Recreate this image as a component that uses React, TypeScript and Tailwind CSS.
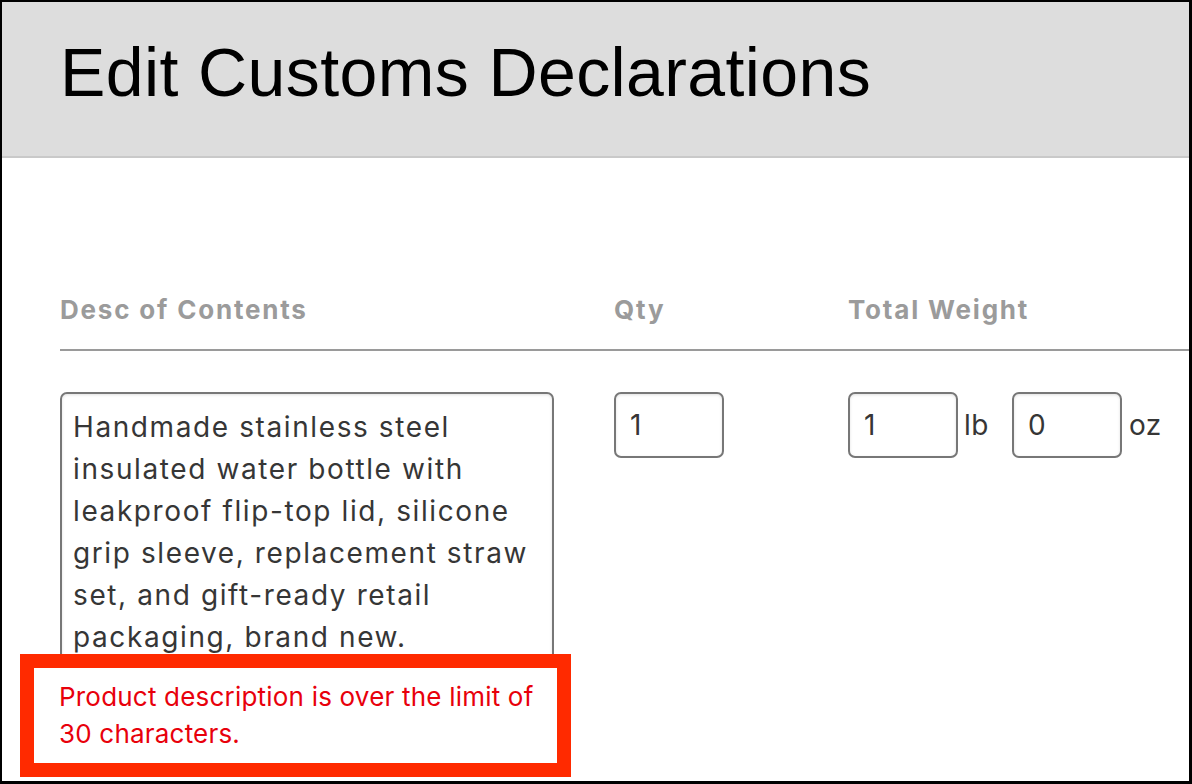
export default function App() {
  return (
    <div className="w-[1192px] h-[784px] bg-black p-[2px] pr-[3px] pb-[3px] overflow-hidden" style={{ fontFamily: "Inter, 'Liberation Sans', sans-serif" }}>
      <div className="h-full bg-white flex flex-col">
        {/* Header */}
        <div className="h-[156px] shrink-0 bg-[#dddddd] border-b-2 border-[#c9c9c9] flex items-center pl-[58px]">
          <h1 className="text-[68px] leading-none text-black tracking-[0.4px] pb-[14px]" style={{ fontFamily: "'Liberation Sans', Arial, sans-serif" }}>
            Edit Customs Declarations
          </h1>
        </div>

        {/* Table */}
        <div className="pl-[58px] pt-[139px] relative flex-1">
          <div className="flex items-end border-b-2 border-[#9a9a9a] pb-[26px] text-[26px] font-bold text-[#9b9b9b] leading-none tracking-[1.8px]">
            <div className="w-[554px]">Desc of Contents</div>
            <div className="w-[234px]">Qty</div>
            <div>Total Weight</div>
          </div>

          <div className="flex items-start pt-[41px] text-[28px] text-[#363636]">
            <div className="w-[554px]">
              <textarea
                className="w-[494px] h-[272px] border-2 border-[#777] rounded-[7px] pl-[11px] pr-[8px] pt-[12px] leading-[42px] tracking-[1.6px] text-[#363636] resize-y outline-none shadow-[inset_0_1px_3px_rgba(0,0,0,0.12)]"
                defaultValue="Handmade stainless steel insulated water bottle with leakproof flip-top lid, silicone grip sleeve, replacement straw set, and gift-ready retail packaging, brand new."
              />
            </div>
            <div className="w-[234px]">
              <input
                className="w-[110px] h-[66px] border-2 border-[#777] rounded-[7px] px-[14px] text-[#363636] outline-none shadow-[inset_0_1px_3px_rgba(0,0,0,0.12)]"
                defaultValue="1"
              />
            </div>
            <div className="flex items-center">
              <input
                className="w-[110px] h-[66px] border-2 border-[#777] rounded-[7px] px-[14px] text-[#363636] outline-none shadow-[inset_0_1px_3px_rgba(0,0,0,0.12)]"
                defaultValue="1"
              />
              <span className="ml-[6px] mr-[23px] text-[28px] tracking-[0.5px]">lb</span>
              <input
                className="w-[110px] h-[66px] border-2 border-[#777] rounded-[7px] px-[14px] text-[#363636] outline-none shadow-[inset_0_1px_3px_rgba(0,0,0,0.12)]"
                defaultValue="0"
              />
              <span className="ml-[7px] text-[28px] tracking-[0.5px]">oz</span>
            </div>
          </div>

          {/* Error annotation */}
          <div className="absolute left-[18px] top-[496px] w-[551px] h-[123px] border-[14px] border-[#ff2a00] bg-white pl-[25px] pt-[10px] text-[26px] leading-[37px] tracking-[0.2px] text-[#e8000b]">
            Product description is over the limit of
            <br />
            30 characters.
          </div>
        </div>
      </div>
    </div>
  );
}
